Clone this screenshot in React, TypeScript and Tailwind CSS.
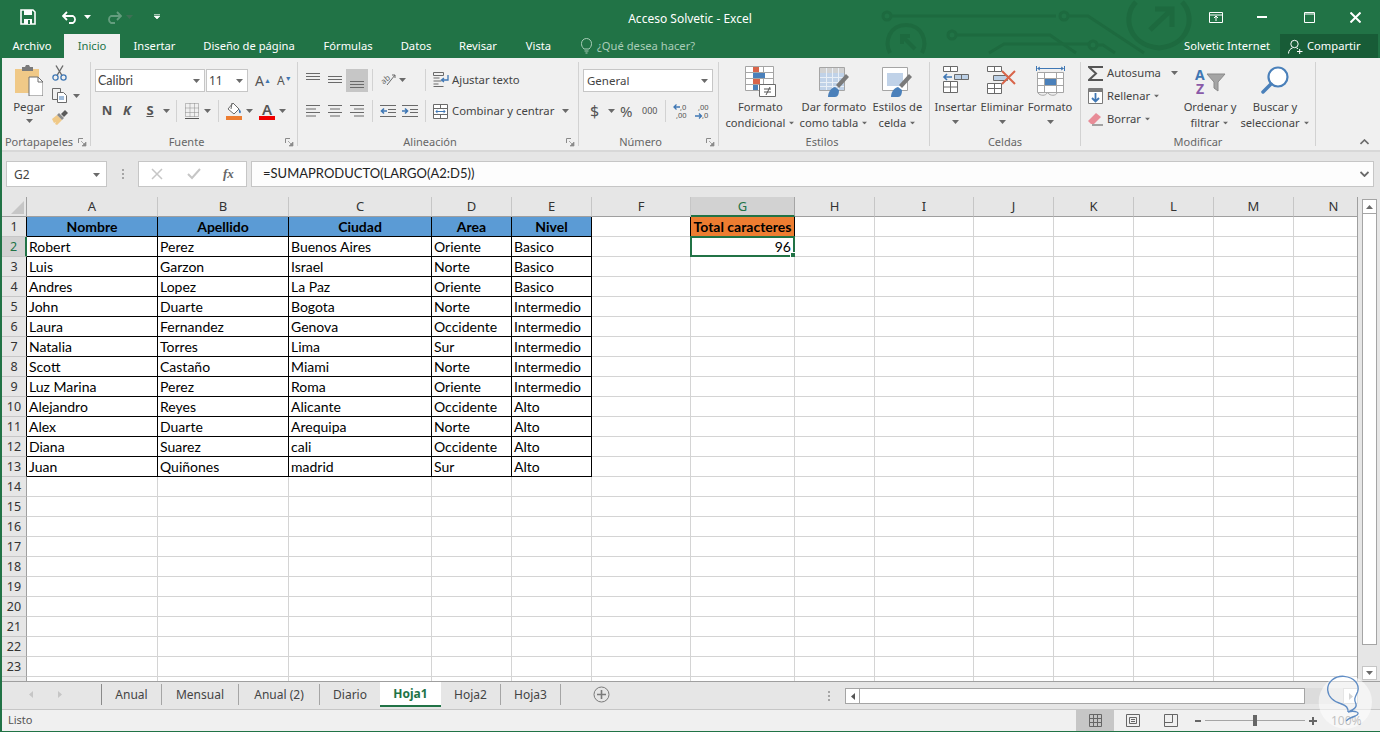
import type { ReactNode } from "react";

// ─── DATA ───────────────────────────────────────────────

const columns = [
  { l: "A", w: "w-[131px]" },
  { l: "B", w: "w-[131px]" },
  { l: "C", w: "w-[143px]" },
  { l: "D", w: "w-[80px]" },
  { l: "E", w: "w-[80px]" },
  { l: "F", w: "w-[99px]" },
  { l: "G", w: "w-[104px]" },
  { l: "H", w: "w-[80px]" },
  { l: "I", w: "w-[99px]" },
  { l: "J", w: "w-[80px]" },
  { l: "K", w: "w-[80px]" },
  { l: "L", w: "w-[80px]" },
  { l: "M", w: "w-[80px]" },
  { l: "N", w: "w-[80px]" },
];

const people = [
  ["Nombre", "Apellido", "Ciudad", "Area", "Nivel"],
  ["Robert", "Perez", "Buenos Aires", "Oriente", "Basico"],
  ["Luis", "Garzon", "Israel", "Norte", "Basico"],
  ["Andres", "Lopez", "La Paz", "Oriente", "Basico"],
  ["John", "Duarte", "Bogota", "Norte", "Intermedio"],
  ["Laura", "Fernandez", "Genova", "Occidente", "Intermedio"],
  ["Natalia", "Torres", "Lima", "Sur", "Intermedio"],
  ["Scott", "Castaño", "Miami", "Norte", "Intermedio"],
  ["Luz Marina", "Perez", "Roma", "Oriente", "Intermedio"],
  ["Alejandro", "Reyes", "Alicante", "Occidente", "Alto"],
  ["Alex", "Duarte", "Arequipa", "Norte", "Alto"],
  ["Diana", "Suarez", "cali", "Occidente", "Alto"],
  ["Juan", "Quiñones", "madrid", "Sur", "Alto"],
];

const tabs = [
  { t: "Insertar", w: "w-[69px]" },
  { t: "Diseño de página", w: "w-[120px]" },
  { t: "Fórmulas", w: "w-[78px]" },
  { t: "Datos", w: "w-[58px]" },
  { t: "Revisar", w: "w-[66px]" },
  { t: "Vista", w: "w-[55px]" },
];

const sheets = [
  { t: "Anual", w: "w-[59px]" },
  { t: "Mensual", w: "w-[76px]" },
  { t: "Anual (2)", w: "w-[80px]" },
  { t: "Diario", w: "w-[60px]" },
];

// ─── SMALL PARTS ────────────────────────────────────────

function Caret({ className = "" }: { className?: string }) {
  return (
    <svg width="7" height="4" viewBox="0 0 7 4" className={`shrink-0 ${className}`}>
      <path d="M0 0h7L3.5 4z" fill="#6a6a6a" />
    </svg>
  );
}

function Launcher() {
  return (
    <svg width="9" height="9" viewBox="0 0 9 9" className="absolute right-[3px] top-[4px]">
      <path d="M.5 5V.5H5" fill="none" stroke="#8a8a8a" />
      <path d="M3 3l4 4M8 4v4H4z" fill="#8a8a8a" stroke="#8a8a8a" strokeWidth=".7" />
    </svg>
  );
}

function Group({ label, className, labelClass = "", launcher, children }: { label: string; className: string; labelClass?: string; launcher?: boolean; children: ReactNode }) {
  return (
    <>
      <div className={`flex h-[88px] shrink-0 flex-col ${className}`}>
        <div className="h-[72px]">{children}</div>
        <div className={`relative h-[16px] text-center text-[11px] leading-[16px] text-[#666] ${labelClass}`}>
          {label}
          {launcher && <Launcher />}
        </div>
      </div>
      <div className="h-[84px] w-px shrink-0 bg-[#d2d2d2]" />
    </>
  );
}

function VSep({ className = "" }: { className?: string }) {
  return <div className={`h-[22px] w-px shrink-0 bg-[#d2d2d2] ${className}`} />;
}

function Lines({ v }: { v: "top" | "mid" | "bot" }) {
  const ys = v === "top" ? [2, 5, 8] : v === "mid" ? [5, 8, 11] : [8, 11, 14];
  return (
    <svg width="14" height="16" viewBox="0 0 14 16">
      {ys.map((y) => (
        <path key={y} d={`M0 ${y + 0.5}h14`} stroke="#6a6a6a" />
      ))}
    </svg>
  );
}

function HAlign({ a }: { a: "l" | "c" | "r" }) {
  const rows = [
    [0, 14],
    [a === "l" ? 0 : a === "c" ? 2 : 4, a === "l" ? 10 : a === "c" ? 12 : 14],
    [0, 14],
    [a === "l" ? 0 : a === "c" ? 2 : 4, a === "l" ? 10 : a === "c" ? 12 : 14],
  ];
  return (
    <svg width="14" height="14" viewBox="0 0 14 14">
      {rows.map((r, i) => (
        <path key={i} d={`M${r[0]} ${i * 3.5 + 1.5}H${r[1]}`} stroke="#6a6a6a" />
      ))}
    </svg>
  );
}

function Indent({ out }: { out?: boolean }) {
  return (
    <svg width="16" height="14" viewBox="0 0 16 14">
      <path d="M0 1.5h16M8 5.5h8M8 8.5h8M0 12.5h16" stroke="#6a6a6a" />
      <path d={out ? "M7 7H2M4 4.5L1.5 7 4 9.5" : "M0 7h5M3 4.5L5.5 7 3 9.5"} fill="none" stroke="#3f77b4" strokeWidth="1.6" />
    </svg>
  );
}

function Split({ top, bottom, className = "" }: { top: string; bottom: string; className?: string }) {
  return (
    <div className={`flex flex-col items-center text-[11.2px] leading-[16px] text-[#444] ${className}`}>
      <span className="whitespace-nowrap">{top}</span>
      <span className="flex items-center gap-[3px] whitespace-nowrap">
        {bottom}
        <Caret className="scale-75" />
      </span>
    </div>
  );
}

// ─── RIBBON ICONS ───────────────────────────────────────

function Clipboard() {
  return (
    <svg width="28" height="31" viewBox="0 0 28 31">
      <path d="M0 4h24v24H0z" fill="#f0c987" />
      <path d="M7 4V2h3l1-2h3l1 2h3v4H7z" fill="#7a7a7a" />
      <path d="M14 12h9l5 5v14H14z" fill="#fff" stroke="#6f6f6f" />
      <path d="M23 12v5h5" fill="none" stroke="#6f6f6f" />
    </svg>
  );
}

function Scissors() {
  return (
    <svg width="15" height="16" viewBox="0 0 15 16">
      <path d="M4 .5l6 10M11 .5l-6 10" stroke="#6a6a6a" strokeWidth="1.4" fill="none" />
      <circle cx="3.5" cy="12.5" r="2.6" fill="none" stroke="#3f77b4" strokeWidth="1.3" />
      <circle cx="11.5" cy="12.5" r="2.6" fill="none" stroke="#3f77b4" strokeWidth="1.3" />
    </svg>
  );
}

function CopyIcon() {
  return (
    <svg width="15" height="15" viewBox="0 0 15 15">
      <path d="M.5.5h8v11h-8z" fill="#f0f0f0" stroke="#6a6a6a" />
      <path d="M5.5 4.5h6l3 3v7h-9z" fill="#fff" stroke="#6a6a6a" />
      <path d="M7 9h5M7 11h5" stroke="#3f77b4" />
    </svg>
  );
}

function Brush() {
  return (
    <svg width="16" height="15" viewBox="0 0 16 15">
      <path d="M0 9l5-4 5 5-5 5-2-1 1-2-2 1z" fill="#f0c987" />
      <path d="M5 5l5 5 2-2-5-5z" fill="#8a8a8a" />
      <path d="M9 4l4-4 3 3-4 4z" fill="#5a5a5a" />
    </svg>
  );
}

function BordersIcon() {
  return (
    <svg width="14" height="17" viewBox="0 0 14 17">
      <path d="M.5.5h13v13H.5zM.5 5h13M.5 9.5h13M5 .5v13M9.5.5v13" fill="none" stroke="#8a8a8a" strokeDasharray="1 1" />
      <path d="M0 15.5h14" stroke="#555" />
    </svg>
  );
}

function FillIcon() {
  return (
    <div className="flex flex-col items-center">
      <svg width="16" height="14" viewBox="0 0 16 14">
        <path d="M2 7l5-6 6 6-5 5z" fill="#fff" stroke="#6a6a6a" />
        <path d="M13 7c1.5 1 2.5 3 1.5 4s-2-.5-1.5-4z" fill="#3f77b4" />
        <path d="M6 1l-1 6" stroke="#6a6a6a" />
      </svg>
      <div className="h-[4px] w-[16px] bg-[#ed7d31]" />
    </div>
  );
}

function FontColorIcon() {
  return (
    <div className="flex w-[16px] flex-col items-center">
      <span className="h-[14px] text-[15px] font-semibold leading-[14px] text-[#555]">A</span>
      <div className="h-[4px] w-[16px] bg-[#f00000]" />
    </div>
  );
}

function OrientationIcon() {
  return (
    <svg width="16" height="14" viewBox="0 0 16 14" overflow="visible">
      <text x="1" y="10" fontSize="8" fill="#6a6a6a" transform="rotate(-40 6 8)" fontFamily="Noto Sans">ab</text>
      <path d="M7 13L15 3M12 3h3v3" fill="none" stroke="#6a6a6a" />
    </svg>
  );
}

function WrapIcon() {
  return (
    <svg width="17" height="15" viewBox="0 0 17 15">
      <path d="M.5.5h10v3H.5zM.5 6h6M.5 9h8M.5 12h5M.5 14.5h10" fill="none" stroke="#6a6a6a" />
      <path d="M15 3v5H9M11 6L8.5 8 11 10" fill="none" stroke="#3f77b4" strokeWidth="1.3" />
    </svg>
  );
}

function MergeIcon() {
  return (
    <svg width="15" height="15" viewBox="0 0 15 15">
      <path d="M.5.5h14v14H.5zM.5 4.5h14M.5 10.5h14M7.5.5v4M7.5 10.5v4" fill="#fff" stroke="#6a6a6a" />
      <path d="M3 7.5h9M4.5 5.8L3 7.5l1.5 1.7M10.5 5.8L12 7.5l-1.5 1.7" fill="none" stroke="#3f77b4" />
    </svg>
  );
}

function DecIcon({ more }: { more?: boolean }) {
  return (
    <svg width="16" height="17" viewBox="0 0 16 17">
      <text x={more ? 3 : 7} y="7" fontSize="7.5" fill="#555" fontFamily="Noto Sans">{more ? ",00" : ",0"}</text>
      <text x={more ? 7 : 3} y="15" fontSize="7.5" fill="#555" fontFamily="Noto Sans">{more ? ",0" : ",00"}</text>
      <path d={more ? "M0 13h6M4 10.5L6.5 13 4 15.5" : "M7 4H1M3.5 1.5L1 4l2.5 2.5"} fill="none" stroke="#3f77b4" strokeWidth="1.3" />
    </svg>
  );
}

function CondFormat() {
  return (
    <svg width="31" height="31" viewBox="0 0 31 31">
      <path d="M.5.5h28v24H.5zM.5 6.5h28M.5 12.5h28M.5 18.5h28M8.5.5v24M18.5.5v24" fill="#fff" stroke="#a5a5a5" />
      <path d="M8 1h6v5H8zM8 13h7v5H8z" fill="#d9654a" />
      <path d="M8 7h12v5H8zM8 19h5v5H8z" fill="#4a80ba" />
      <path d="M14.5 18.5h16v12h-16z" fill="#fff" stroke="#6a6a6a" />
      <path d="M19 23h7M19 26h7M25 21l-4 8" fill="none" stroke="#555" />
    </svg>
  );
}

function TableFormat({ single }: { single?: boolean }) {
  return (
    <svg width="30" height="30" viewBox="0 0 30 30">
      <path d="M.5.5h25v23H.5z" fill="#fff" stroke="#a5a5a5" />
      <path d="M1 1h24v5H1z" fill={single ? "#fff" : "#d2d2d2"} />
      <path d={single ? "M5 6h16v13H5z" : "M1 6h24v17H1z"} fill="#c0d2e8" />
      {!single && <path d="M1 10.5h24M1 15.5h24M1 19.5h24M7.5 1v22M13.5 1v22M19.5 1v22" stroke="#e9eff6" />}
      <path d="M17 18L27 7l3 3-10 11z" fill="#7a7a7a" />
      <path d="M9 30c0-5 3-9 7-10l4 3c0 4-1 7-4 7z" fill="#4a80ba" />
    </svg>
  );
}

function InsertIcon() {
  return (
    <svg width="27" height="27" viewBox="0 0 27 27">
      <path d="M1.5.5h14v5h-14zM8.5.5v5M1.5 15.5h14v11h-14zM1.5 21h14M8.5 15.5v11" fill="#fff" stroke="#6a6a6a" />
      <path d="M12.5 8.5h14v5h-14zM19.5 8.5v5" fill="#bcd0e6" stroke="#6a6a6a" />
      <path d="M2 11h8M5 8l-3 3 3 3" fill="none" stroke="#3f77b4" strokeWidth="1.6" />
    </svg>
  );
}

function DeleteIcon() {
  return (
    <svg width="30" height="28" viewBox="0 0 30 28">
      <path d="M.5.5h14v5h-14zM7.5.5v5M.5 17.5h14v10h-14zM.5 22.5h14M7.5 17.5v10" fill="#fff" stroke="#6a6a6a" />
      <path d="M6.5 9.5h14v5h-14z" fill="#bcd0e6" stroke="#6a6a6a" />
      <path d="M15 5l13 13M28 5L15 18" stroke="#d9654a" strokeWidth="2" />
    </svg>
  );
}

function FormatIcon() {
  return (
    <svg width="29" height="31" viewBox="0 0 29 31">
      <path d="M.5 0v5M28.5 0v5M2 2.5h25M4 1L1.5 2.5 4 4M25 1l2.5 1.5L25 4" fill="none" stroke="#3f77b4" />
      <path d="M1.5 6.5h26v20h-26zM1.5 12.5h26M1.5 19.5h26M8.5 6.5v20M20.5 6.5v20" fill="#fff" stroke="#a5a5a5" />
      <path d="M9 13h11v6H9z" fill="#4a80ba" />
      <path d="M2 27c2 3 8 3 9 0M12 27c2 3 8 3 9 0" fill="none" stroke="#a5a5a5" />
    </svg>
  );
}

function FillDown() {
  return (
    <svg width="15" height="16" viewBox="0 0 15 16">
      <path d="M.5.5h14v15H.5z" fill="#fff" stroke="#7a7a7a" />
      <path d="M1 1h13v3H1z" fill="#7a7a7a" />
      <path d="M7.5 5v8M4 10l3.5 3.5L11 10" fill="none" stroke="#3f77b4" strokeWidth="1.8" />
    </svg>
  );
}

function Eraser() {
  return (
    <svg width="15" height="14" viewBox="0 0 15 14">
      <path d="M0 9l8-8 5 4-7 7H3z" fill="#e88c97" />
      <path d="M4 13h11" stroke="#555" />
    </svg>
  );
}

function SortIcon() {
  return (
    <svg width="32" height="28" viewBox="0 0 32 28" overflow="visible">
      <text x="1" y="13" fontSize="14" fontWeight="700" fill="#3f77b4" fontFamily="Noto Sans">A</text>
      <text x="2" y="27" fontSize="14" fontWeight="700" fill="#8a5aa8" fontFamily="Noto Sans">Z</text>
      <path d="M13 7h18l-7 8v9l-4-3v-6z" fill="#a5a5a5" stroke="#8a8a8a" />
    </svg>
  );
}

function SearchIcon() {
  return (
    <svg width="28" height="28" viewBox="0 0 28 28">
      <circle cx="17" cy="11" r="9.5" fill="#fff" stroke="#4a80ba" strokeWidth="2.2" />
      <path d="M10 18L2 26" stroke="#4a80ba" strokeWidth="3.5" strokeLinecap="round" />
    </svg>
  );
}

// ─── TITLE BAR ──────────────────────────────────────────

function Circuit() {
  return (
    <svg width="420" height="58" viewBox="0 0 420 58" className="absolute left-[780px] top-0" fill="none" stroke="#1d6a3f" strokeWidth="3">
      <circle cx="107" cy="16" r="4" />
      <path d="M111 16h165" />
      <circle cx="284" cy="16" r="4" />
      <path d="M288 16h20l56 37" />
      <circle cx="172" cy="35" r="4" />
      <path d="M176 35h94l26 18" />
      <path d="M209 53l15-9h86" />
      <circle cx="313" cy="45" r="4" />
      <path d="M317 45h6l12 8" />
      <path d="M110 53c-6-12 0-28 16-28s22 16 16 28" strokeWidth="4" />
      <path d="M135 49l-13-13M122 44v-8h8" strokeWidth="4" />
      <path d="M356 2c-14 14-8 43 23 46 31-3 37-32 23-46" strokeWidth="5" />
      <path d="M370 30l21-20M375 9h17v18" strokeWidth="5" />
    </svg>
  );
}

function TitleBar() {
  return (
    <div className="relative flex h-[34px] items-center text-white">
      <svg width="16" height="16" viewBox="0 0 16 16" className="ml-[20px]">
        <path d="M1 1h12l2 2v12H1z" fill="none" stroke="#fff" strokeWidth="1.6" />
        <path d="M4 1h8v5H4zM4 10h8v5H4z" fill="#fff" />
        <path d="M8 11h2v4H8z" fill="#217346" />
      </svg>
      <svg width="17" height="13" viewBox="0 0 17 13" className="ml-[26px]" fill="none" stroke="#fff" strokeWidth="1.8">
        <path d="M1 5h10a4 4 0 010 7H7M5 1L1 5l4 4" />
      </svg>
      <Caret className="ml-[5px] brightness-[3]" />
      <svg width="17" height="13" viewBox="0 0 17 13" className="ml-[14px] opacity-30" fill="none" stroke="#fff" strokeWidth="1.8">
        <path d="M16 5H6a4 4 0 000 7h4M12 1l4 4-4 4" />
      </svg>
      <Caret className="ml-[4px] opacity-40" />
      <svg width="6" height="6" viewBox="0 0 6 6" className="ml-[21px]">
        <path d="M0 .5h6M0 2h6L3 5z" fill="#fff" stroke="#fff" strokeWidth=".6" />
      </svg>
      <div className="absolute left-0 right-0 top-[11px] text-center text-[12px] leading-[15px]">Acceso Solvetic - Excel</div>
      <div className="ml-auto mr-[6px] flex items-center">
        <svg width="14" height="11" viewBox="0 0 14 11" className="mr-[34px]" fill="none" stroke="#fff">
          <path d="M.5.5h13v10H.5zM.5 3h13" />
          <path d="M7 9V4.5M5 6l2-2 2 2" />
        </svg>
        <div className="mr-[37px] h-[2px] w-[10px] bg-white" />
        <svg width="11" height="11" viewBox="0 0 11 11" className="mr-[35px]" fill="none" stroke="#fff">
          <path d="M.5.5h10v10H.5zM.5 2h10" />
        </svg>
        <svg width="11" height="11" viewBox="0 0 11 11" className="mr-[13px]" stroke="#fff" strokeWidth="2">
          <path d="M.5.5l10 10M10.5.5l-10 10" />
        </svg>
      </div>
    </div>
  );
}

function TabRow() {
  return (
    <div className="relative flex h-[24px] items-stretch text-[11.2px] text-white">
      <div className="flex w-[64px] items-center justify-center pt-px">Archivo</div>
      <div className="flex w-[56px] items-center justify-center bg-[#f0f0f0] pt-px text-[#217346]">Inicio</div>
      {tabs.map((t) => (
        <div key={t.t} className={`flex items-center justify-center pt-px ${t.w}`}>
          {t.t}
        </div>
      ))}
      <svg width="11" height="16" viewBox="0 0 11 16" className="ml-[15px] self-center" fill="none" stroke="#a9cdb8">
        <path d="M3 11C1 9 .5 7.5.5 5.5a5 5 0 0110 0C10.5 7.5 10 9 8 11zM3.5 13h4M4.5 15h2" />
      </svg>
      <div className="ml-[5px] flex items-center pt-px text-[#a9cdb8]">¿Qué desea hacer?</div>
      <div className="ml-auto flex items-center pt-px">Solvetic Internet</div>
      <div className="ml-[10px] mr-[2px] flex w-[98px] items-center bg-[#185c37] pl-[8px] pt-px">
        <svg width="15" height="15" viewBox="0 0 15 15" fill="none" stroke="#fff" className="mr-[4px]">
          <circle cx="6.5" cy="5" r="3.7" />
          <path d="M.5 14.5c0-3 2-5 4-5.5M8.5 9c.5.1 1 .3 1.5.6M9 12.5h5.5M11.7 10v5" />
        </svg>
        Compartir
      </div>
    </div>
  );
}

// ─── RIBBON ─────────────────────────────────────────────

function Ribbon() {
  return (
    <div className="flex h-[92px] items-start bg-[#f0f0f0] pt-[4px] text-[#444]">
      <Group label="Portapapeles" className="w-[88px]" labelClass="pr-[14px]" launcher>
        <div className="flex pl-[9px] pt-[3px]">
          <div className="flex w-[36px] flex-col items-center">
            <Clipboard />
            <span className="mt-[3px] text-[11.5px] leading-[16px]">Pegar</span>
            <Caret className="mt-[4px]" />
          </div>
          <div className="ml-[5px] flex flex-col gap-[7px]">
            <Scissors />
            <div className="flex items-center gap-[6px]">
              <CopyIcon />
              <Caret />
            </div>
            <Brush />
          </div>
        </div>
      </Group>

      <Group label="Fuente" className="w-[206px]" labelClass="pr-[15px]" launcher>
        <div className="pl-[4px] pt-[7px]">
          <div className="flex items-center">
            <div className="flex h-[23px] w-[110px] items-center justify-between border border-[#c6c6c6] bg-white pl-[2px] pr-[4px] text-[12px]">
              <span className="pt-px font-['Lato',sans-serif] text-[12.5px]">Calibri</span>
              <Caret />
            </div>
            <div className="ml-px flex h-[23px] w-[42px] items-center justify-between border border-[#c6c6c6] bg-white pl-[2px] pr-[4px] text-[12px]">
              11
              <Caret />
            </div>
            <span className="ml-[7px] w-[15px] text-[14px] text-[#555]">
              A<sup className="text-[7px] text-[#3f77b4]">▲</sup>
            </span>
            <span className="ml-[7px] w-[14px] text-[12px] text-[#555]">
              A<sup className="text-[7px] text-[#3f77b4]">▼</sup>
            </span>
          </div>
          <div className="ml-[2px] mt-[8px] flex h-[22px] items-center">
            <span className="w-[20px] text-center text-[13px] font-bold text-[#555]">N</span>
            <span className="w-[20px] text-center text-[13px] font-bold italic text-[#555]">K</span>
            <span className="w-[26px] text-center text-[13px] font-bold text-[#555] underline">S</span>
            <Caret />
            <VSep className="ml-[6px]" />
            <div className="ml-[8px]">
              <BordersIcon />
            </div>
            <Caret className="ml-[5px]" />
            <VSep className="ml-[7px]" />
            <div className="ml-[7px]">
              <FillIcon />
            </div>
            <Caret className="ml-[4px]" />
            <div className="ml-[6px]">
              <FontColorIcon />
            </div>
            <Caret className="ml-[4px]" />
          </div>
        </div>
      </Group>

      <Group label="Alineación" className="w-[280px]" labelClass="pr-[16px]" launcher>
        <div className="pl-[8px]">
          <div className="flex h-[38px] items-start pt-[7px]">
            <div className="mt-[2px]">
              <Lines v="top" />
            </div>
            <div className="ml-[8px] mt-[2px]">
              <Lines v="mid" />
            </div>
            <div className="ml-[4px] flex h-[23px] w-[22px] items-center justify-center bg-[#c6c6c6]">
              <Lines v="bot" />
            </div>
            <VSep className="ml-[4px]" />
            <div className="ml-[7px] mt-[3px]">
              <OrientationIcon />
            </div>
            <Caret className="ml-[3px] mt-[9px]" />
            <VSep className="ml-[19px]" />
            <div className="ml-[7px] mt-[3px]">
              <WrapIcon />
            </div>
            <span className="ml-[2px] mt-[3px] text-[11.3px] leading-[16px]">Ajustar texto</span>
          </div>
          <div className="flex h-[22px] items-center">
            <HAlign a="l" />
            <div className="ml-[8px]">
              <HAlign a="c" />
            </div>
            <div className="ml-[8px]">
              <HAlign a="r" />
            </div>
            <VSep className="ml-[8px]" />
            <div className="ml-[7px]">
              <Indent out />
            </div>
            <div className="ml-[6px]">
              <Indent />
            </div>
            <VSep className="ml-[7px]" />
            <div className="ml-[7px]">
              <MergeIcon />
            </div>
            <span className="ml-[4px] text-[11.3px]">Combinar y centrar</span>
            <Caret className="ml-[8px]" />
          </div>
        </div>
      </Group>

      <Group label="Número" className="w-[139px]" labelClass="pr-[16px]" launcher>
        <div className="pl-[4px] pt-[7px]">
          <div className="flex h-[23px] w-[130px] items-center justify-between border border-[#c6c6c6] bg-white pl-[3px] pr-[4px] text-[11.5px]">
            General
            <Caret />
          </div>
          <div className="mt-[8px] flex h-[22px] items-center">
            <span className="ml-[7px] w-[10px] text-[16px] text-[#555]">$</span>
            <Caret className="ml-[8px]" />
            <span className="ml-[5px] w-[16px] text-[15px] text-[#555]">%</span>
            <span className="ml-[6px] w-[16px] text-[9px] text-[#555]">000</span>
            <VSep className="ml-[7px]" />
            <div className="ml-[7px]">
              <DecIcon />
            </div>
            <div className="ml-[6px]">
              <DecIcon more />
            </div>
          </div>
        </div>
      </Group>

      <Group label="Estilos" className="w-[210px]" labelClass="pr-[4px]">
        <div className="flex pt-[4px]">
          <div className="flex w-[84px] flex-col items-center">
            <CondFormat />
            <Split top="Formato" bottom="condicional" className="mt-[2px]" />
          </div>
          <div className="flex w-[64px] flex-col items-center">
            <div className="mt-px">
              <TableFormat />
            </div>
            <Split top="Dar formato" bottom="como tabla" className="mt-[2px]" />
          </div>
          <div className="flex w-[64px] flex-col items-center">
            <div className="mt-px">
              <TableFormat single />
            </div>
            <Split top="Estilos de" bottom="celda" className="mt-[2px]" />
          </div>
        </div>
      </Group>

      <Group label="Celdas" className="w-[150px]">
        <div className="flex pt-[4px] text-[11.2px] leading-[16px]">
          <div className="flex w-[51px] flex-col items-center">
            <div className="h-[31px]">
              <InsertIcon />
            </div>
            <span className="mt-[2px]">Insertar</span>
            <Caret className="mt-[5px]" />
          </div>
          <div className="flex w-[42px] flex-col items-center">
            <div className="h-[31px]">
              <DeleteIcon />
            </div>
            <span className="mt-[2px]">Eliminar</span>
            <Caret className="mt-[5px]" />
          </div>
          <div className="flex w-[54px] flex-col items-center">
            <FormatIcon />
            <span className="mt-[2px]">Formato</span>
            <Caret className="mt-[5px]" />
          </div>
        </div>
      </Group>

      <Group label="Modificar" className="w-[234px]">
        <div className="flex pl-[7px] pt-[3px] text-[11.2px] leading-[16px]">
          <div className="flex w-[96px] flex-col gap-[7px]">
            <div className="flex h-[16px] items-center">
              <svg width="15" height="15" viewBox="0 0 15 15" className="mr-[4px]">
                <path d="M15 1H1l7 6.5L1 14h14" fill="none" stroke="#555" strokeWidth="2" />
              </svg>
              Autosuma
              <Caret className="ml-[10px]" />
            </div>
            <div className="flex h-[16px] items-center">
              <div className="mr-[4px]">
                <FillDown />
              </div>
              Rellenar
              <Caret className="ml-[3px] scale-75" />
            </div>
            <div className="flex h-[16px] items-center">
              <div className="mr-[4px]">
                <Eraser />
              </div>
              Borrar
              <Caret className="ml-[3px] scale-75" />
            </div>
          </div>
          <div className="flex w-[52px] flex-col items-center pt-[2px]">
            <SortIcon />
            <Split top="Ordenar y" bottom="filtrar" className="mt-[4px]" />
          </div>
          <div className="flex w-[78px] flex-col items-center pt-px">
            <SearchIcon />
            <Split top="Buscar y" bottom="seleccionar" className="mt-[5px]" />
          </div>
        </div>
      </Group>

      <div className="ml-[44px] mt-[77px]">
        <svg width="9" height="6" viewBox="0 0 9 6" fill="none" stroke="#6a6a6a" strokeWidth="1.6">
          <path d="M.5 5l4-4 4 4" />
        </svg>
      </div>
    </div>
  );
}

// ─── FORMULA BAR ────────────────────────────────────────

function FormulaBar() {
  return (
    <div className="flex h-[47px] items-start border-t-2 border-[#d8d8d8] bg-[#e6e6e6] pl-[4px] pt-[9px]">
      <div className="flex h-[26px] w-[101px] items-center justify-between border border-[#c6c6c6] bg-white pl-[7px] pr-[6px] pt-px text-[12px] text-[#444]">
        G2
        <Caret />
      </div>
      <div className="ml-[15px] mt-[8px] flex w-[2px] flex-col gap-[2px]">
        <div className="h-[2px] bg-[#a5a5a5]" />
        <div className="h-[2px] bg-[#a5a5a5]" />
        <div className="h-[2px] bg-[#a5a5a5]" />
      </div>
      <div className="ml-[14px] flex h-[26px] w-[109px] items-center border border-[#c6c6c6] bg-white">
        <svg width="12" height="12" viewBox="0 0 12 12" className="ml-[12px]" stroke="#c6c6c6" strokeWidth="1.5">
          <path d="M1 1l10 10M11 1L1 11" />
        </svg>
        <svg width="14" height="12" viewBox="0 0 14 12" className="ml-[24px]" fill="none" stroke="#c6c6c6" strokeWidth="2">
          <path d="M1 6l4 4 8-9" />
        </svg>
        <span className="ml-[22px] font-['Liberation_Serif',serif] text-[13px] font-bold italic text-[#666]">fx</span>
      </div>
      <div className="ml-[4px] flex h-[26px] w-[1123px] items-center justify-between border border-[#c6c6c6] bg-[#fdfdfd] pl-[11px] pr-[4px] font-['Lato',sans-serif] text-[13px] text-[#222]">
        =SUMAPRODUCTO(LARGO(A2:D5))
        <svg width="9" height="6" viewBox="0 0 9 6" fill="none" stroke="#6a6a6a" strokeWidth="1.8">
          <path d="M.5 1l4 4 4-4" />
        </svg>
      </div>
    </div>
  );
}

// ─── SHEET ──────────────────────────────────────────────

function HeaderRow() {
  return (
    <div className="flex h-[20px]">
      <div className="relative h-[20px] w-[25px] shrink-0 border-b border-r border-[#9f9f9f] bg-[#e6e6e6]">
        <svg width="13" height="13" viewBox="0 0 13 13" className="absolute bottom-[2px] right-[2px]">
          <path d="M13 0v13H0z" fill="#c6c6c6" />
        </svg>
      </div>
      {columns.map((c) => (
        <div
          key={c.l}
          className={`flex h-[20px] shrink-0 items-center justify-center border-r pt-px text-[13px] ${c.w} ${
            c.l === "G"
              ? "border-b-2 border-r-[#a5a5a5] border-b-[#217346] bg-[#d2d2d2] text-[#217346]"
              : "border-b border-[#9f9f9f] border-r-[#c6c6c6] bg-[#e6e6e6] text-[#333]"
          }`}
        >
          {c.l}
        </div>
      ))}
    </div>
  );
}

function DataCell({ col, w, row }: { col: number; w: string; row: number }) {
  const inTable = col < 5 && row < 13;
  const text = inTable ? people[row][col] : "";
  const isHead = row === 0;
  const isTotal = col === 6 && row === 0;
  const isResult = col === 6 && row === 1;
  const fill = inTable && isHead ? "bg-[#5b9bd5] font-bold justify-center" : isTotal ? "bg-[#ed7d31] font-bold justify-center" : "bg-white";
  const line = inTable || isTotal ? "border-black" : col === 5 && row === 0 ? "border-b-[#d4d4d4] border-r-black" : "border-[#d4d4d4]";
  return (
    <div className={`relative flex h-[20px] shrink-0 items-center whitespace-nowrap border-b border-r px-[2px] text-black ${w} ${fill} ${line}`}>
      {text}
      {isTotal && "Total caracteres"}
      {isResult && <span className="ml-auto pr-px">96</span>}
      {isResult && (
        <div className="absolute -left-px -top-px h-[21px] w-[105px] border-2 border-[#217346]">
          <div className="absolute -bottom-[3px] -right-[3px] h-[6px] w-[6px] border border-white bg-[#217346]" />
        </div>
      )}
    </div>
  );
}

function Sheet() {
  const rows = Array.from({ length: 24 }, (_, i) => i);
  return (
    <div className="flex h-[484px] overflow-hidden border-l-2 border-[#217346] bg-[#e6e6e6]">
      <div className="w-[1356px] shrink-0 overflow-hidden border-r border-[#9f9f9f]">
        <HeaderRow />
        <div className="font-['Lato',sans-serif] text-[14px]">
          {rows.map((r) => (
            <div key={r} className="flex h-[20px]">
              <div
                className={`flex h-[20px] w-[25px] shrink-0 items-center justify-center border-b pt-px font-['Noto_Sans',sans-serif] text-[12.5px] ${
                  r === 1
                    ? "border-r-2 border-b-[#c6c6c6] border-r-[#217346] bg-[#d2d2d2] text-[#217346]"
                    : r < 13
                      ? "border-r border-b-[#c6c6c6] border-r-black bg-[#e6e6e6] text-[#333]"
                      : "border-r border-b-[#c6c6c6] border-r-[#9f9f9f] bg-[#e6e6e6] text-[#333]"
                }`}
              >
                {r + 1}
              </div>
              {columns.map((c, i) => (
                <DataCell key={c.l} col={i} w={c.w} row={r} />
              ))}
            </div>
          ))}
        </div>
      </div>
      <div className="flex w-[22px] flex-col items-center bg-[#e6e6e6] pt-[2px]">
        <div className="flex h-[15px] w-[15px] items-center justify-center border border-[#a5a5a5] bg-white">
          <svg width="7" height="4" viewBox="0 0 7 4">
            <path d="M0 4h7L3.5 0z" fill="#6a6a6a" />
          </svg>
        </div>
        <div className="h-[431px] w-[15px] border border-t-0 border-[#a5a5a5] bg-white" />
        <div className="mt-[21px] flex h-[14px] w-[15px] items-center justify-center border border-[#c6c6c6] bg-white">
          <Caret />
        </div>
      </div>
    </div>
  );
}

// ─── BOTTOM BARS ────────────────────────────────────────

function SheetTabs() {
  return (
    <div className="flex h-[29px] items-start border-b border-t border-b-[#c6c6c6] border-t-[#9f9f9f] bg-[#e6e6e6] text-[12px] text-[#444]">
      <svg width="4" height="7" viewBox="0 0 4 7" className="ml-[27px] mt-[9px]">
        <path d="M4 0v7L0 3.5z" fill="#c6c6c6" />
      </svg>
      <svg width="4" height="7" viewBox="0 0 4 7" className="ml-[25px] mt-[9px]">
        <path d="M0 0v7l4-3.5z" fill="#c6c6c6" />
      </svg>
      <div className="ml-[39px] mt-[2px] h-[21px] w-px bg-[#8a8a8a]" />
      {sheets.map((s, i) => (
        <div key={s.t} className="flex">
          <div className={`flex h-[24px] items-center justify-center pt-px ${s.w}`}>{s.t}</div>
          {i < sheets.length - 1 && <div className="mt-[2px] h-[21px] w-px bg-[#a5a5a5]" />}
        </div>
      ))}
      <div className="flex h-[25px] w-[61px] items-center justify-center border-b-2 border-[#217346] bg-white font-bold text-[#217346]">Hoja1</div>
      <div className="flex h-[24px] w-[59px] items-center justify-center pt-px">Hoja2</div>
      <div className="mt-[2px] h-[21px] w-px bg-[#a5a5a5]" />
      <div className="flex h-[24px] w-[59px] items-center justify-center pt-px">Hoja3</div>
      <div className="mt-[2px] h-[21px] w-px bg-[#a5a5a5]" />
      <svg width="17" height="17" viewBox="0 0 17 17" className="ml-[32px] mt-[4px]" fill="none" stroke="#7a7a7a">
        <circle cx="8.5" cy="8.5" r="7.5" />
        <path d="M8.5 4v9M4 8.5h9" strokeWidth="1.6" />
      </svg>
      <div className="ml-[218px] mt-[9px] flex flex-col gap-[2px]">
        <div className="h-[2px] w-[2px] bg-[#a5a5a5]" />
        <div className="h-[2px] w-[2px] bg-[#a5a5a5]" />
        <div className="h-[2px] w-[2px] bg-[#a5a5a5]" />
      </div>
      <div className="ml-[15px] mt-[6px] flex h-[16px] w-[460px] border border-[#a5a5a5] bg-white">
        <div className="flex w-[14px] items-center justify-center border-r border-[#a5a5a5]">
          <svg width="4" height="7" viewBox="0 0 4 7">
            <path d="M4 0v7L0 3.5z" fill="#555" />
          </svg>
        </div>
      </div>
      <div className="mt-[6px] flex h-[16px] w-[53px] justify-end bg-[#dcdcdc]">
        <div className="flex w-[15px] items-center justify-center border border-[#c6c6c6] bg-white">
          <svg width="4" height="7" viewBox="0 0 4 7">
            <path d="M0 0v7l4-3.5z" fill="#a5a5a5" />
          </svg>
        </div>
      </div>
    </div>
  );
}

function StatusBar() {
  return (
    <div className="flex h-[22px] items-center border-b border-l-2 border-[#217346] bg-[#f0f0f0] pl-[6px] text-[11px] text-[#555]">
      Listo
      <div className="ml-auto flex h-full items-center">
        <div className="flex h-full w-[38px] items-center justify-center bg-[#c6c6c6]">
          <svg width="13" height="13" viewBox="0 0 13 13" fill="none" stroke="#666">
            <path d="M.5.5h12v12H.5zM.5 4.5h12M.5 8.5h12M4.5.5v12M8.5.5v12" />
          </svg>
        </div>
        <svg width="14" height="13" viewBox="0 0 14 13" className="ml-[12px]" fill="none" stroke="#666">
          <path d="M.5.5h13v12H.5zM3.5 3.5h7v6h-7zM5 5.5h4M5 7.5h4" />
        </svg>
        <svg width="14" height="13" viewBox="0 0 14 13" className="ml-[24px]" fill="none" stroke="#666">
          <path d="M.5.5h13v12H.5zM.5 8.5h8V.5" />
        </svg>
        <div className="ml-[17px] h-[2px] w-[6px] bg-[#666]" />
        <div className="ml-[4px] flex h-px w-[100px] items-center justify-center bg-[#a5a5a5]">
          <div className="h-[11px] w-[4px] bg-[#666]" />
        </div>
        <svg width="8" height="8" viewBox="0 0 8 8" className="ml-[4px]" stroke="#666" strokeWidth="2">
          <path d="M0 4h8M4 0v8" />
        </svg>
        <span className="ml-[14px] mr-[18px] w-[31px] text-[12px] text-[#777]">100%</span>
      </div>
    </div>
  );
}

function Watermark() {
  return (
    <svg width="100" height="102" viewBox="0 0 300 306" className="absolute bottom-0 right-0" fill="none">
      <circle cx="196" cy="216" r="80" fill="#fff" fillOpacity=".55" />
      <path
        d="M185 222C160 215 145 200 143 180C142 155 165 137 192 139C222 142 240 162 233 185C226 200 220 208 228 222C232 236 214 241 204 246C224 240 247 248 226 258C214 262 204 266 200 272"
        stroke="#5f8cc4"
        strokeWidth="4"
        strokeLinecap="round"
      />
      <path d="M185 222C198 226 205 234 204 246" stroke="#5f8cc4" strokeWidth="4" />
    </svg>
  );
}

// ─── APP ────────────────────────────────────────────────

export default function App() {
  return (
    <div className="relative h-[732px] w-[1380px] overflow-hidden bg-[#217346] font-['Noto_Sans',sans-serif]">
      <Circuit />
      <TitleBar />
      <TabRow />
      <div className="border-l-2 border-[#217346]">
        <Ribbon />
      </div>
      <div className="border-l-2 border-[#217346]">
        <FormulaBar />
      </div>
      <Sheet />
      <div className="border-l-2 border-[#217346]">
        <SheetTabs />
      </div>
      <StatusBar />
      <Watermark />
    </div>
  );
}
